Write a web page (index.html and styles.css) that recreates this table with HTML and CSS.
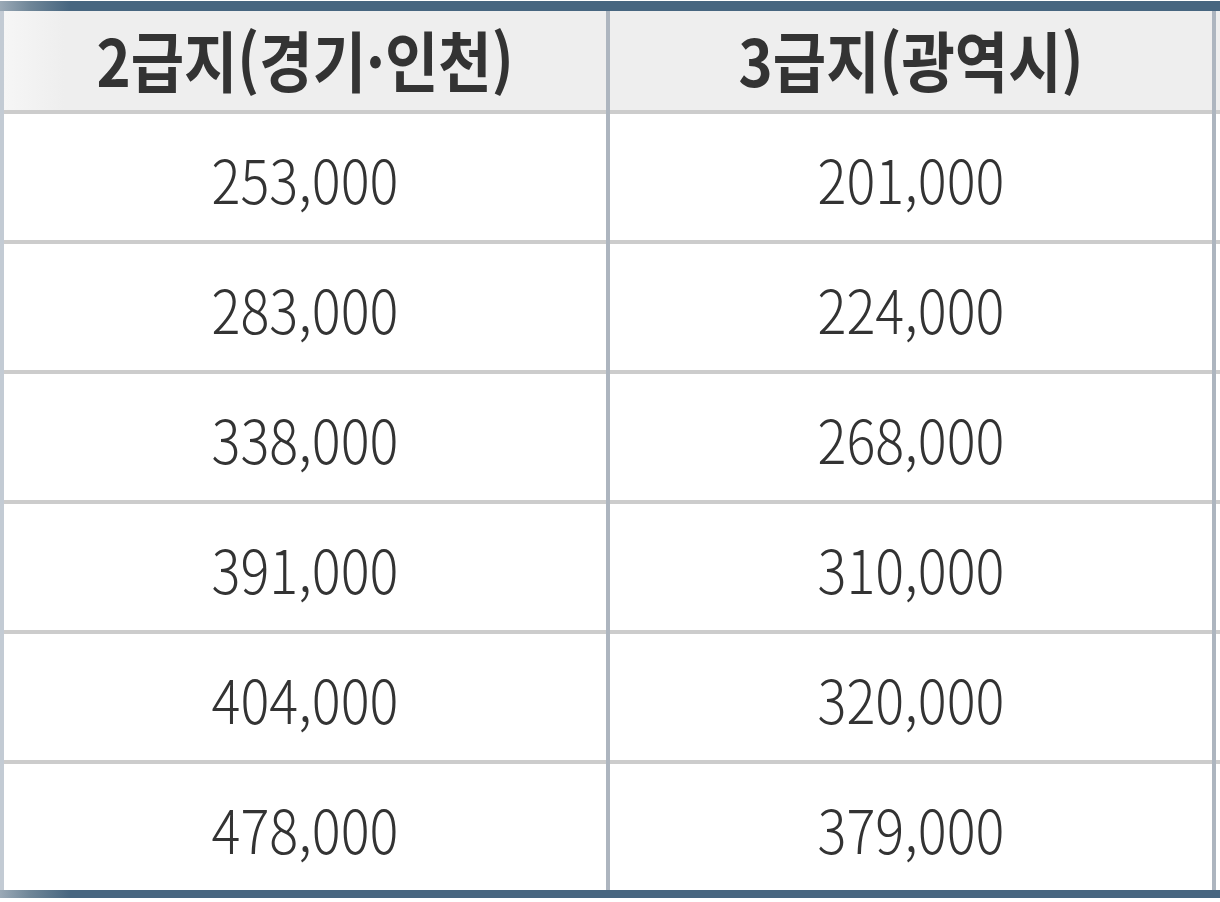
FILE: index.html
```html
<!DOCTYPE html>
<html lang="ko">
<head>
<meta charset="utf-8">
<title>급지별 금액</title>
<link rel="stylesheet" href="styles.css">
</head>
<body>
<div class="frame">
  <div class="bar bar-top"></div>
  <div class="main">
    <div class="edge"></div>
    <div class="col">
      <div class="cell head"><span class="txt">2급지(경기·인천)</span></div>
      <div class="cell"><span class="txt num">253,000</span></div>
      <div class="cell"><span class="txt num">283,000</span></div>
      <div class="cell"><span class="txt num">338,000</span></div>
      <div class="cell"><span class="txt num">391,000</span></div>
      <div class="cell"><span class="txt num">404,000</span></div>
      <div class="cell last"><span class="txt num">478,000</span></div>
    </div>
    <div class="col">
      <div class="cell head"><span class="txt">3급지(광역시)</span></div>
      <div class="cell"><span class="txt num">201,000</span></div>
      <div class="cell"><span class="txt num">224,000</span></div>
      <div class="cell"><span class="txt num">268,000</span></div>
      <div class="cell"><span class="txt num">310,000</span></div>
      <div class="cell"><span class="txt num">320,000</span></div>
      <div class="cell last"><span class="txt num">379,000</span></div>
    </div>
    <div class="col col-cut">
      <div class="cell head"></div>
      <div class="cell"></div>
      <div class="cell"></div>
      <div class="cell"></div>
      <div class="cell"></div>
      <div class="cell"></div>
      <div class="cell last"></div>
    </div>
  </div>
  <div class="bar bar-bottom"></div>
</div>
</body>
</html>
```

FILE: styles.css
```css
html, body {
  margin: 0;
  padding: 0;
  background: #ffffff;
}
body {
  width: 1220px;
  height: 902px;
  overflow: hidden;
  font-family: "Noto Sans CJK KR", "Noto Sans", sans-serif;
  color: #333333;
}
.frame {
  display: flex;
  flex-direction: column;
  padding-top: 1px;
}
.bar {
  height: 10px;
  background: linear-gradient(to right, #9aa9b6 0px, #6f8698 30px, #476680 70px, #476680 100%);
}
.bar-bottom {
  height: 8px;
}
.main {
  display: flex;
  height: 879px;
}
.edge {
  width: 4px;
  flex: none;
  background: #c3cbd4;
}
.col {
  width: 602px;
  flex: none;
  display: flex;
  flex-direction: column;
  border-right: 4px solid #adb5bf;
}
.col-cut {
  width: 4px;
  border-right: none;
}
.cell {
  height: 126px;
  flex: none;
  border-bottom: 4px solid #cccccc;
  display: flex;
  align-items: center;
  justify-content: center;
  background: #ffffff;
}
.cell.head {
  height: 99px;
  background: linear-gradient(to right, #f6f6f6 0px, #eeeeee 60px, #eeeeee 100%);
}
.col + .col .cell.head {
  background: #eeeeee;
}
.cell.last {
  border-bottom: none;
}
.txt {
  display: inline-block;
  font-size: 58px;
  font-weight: 700;
  line-height: 1;
  transform: translateY(-2px) scaleY(1.13);
  white-space: nowrap;
}
.num {
  font-size: 54px;
  font-weight: 300;
  transform: translateY(1px) scaleY(1.13);
}
```
